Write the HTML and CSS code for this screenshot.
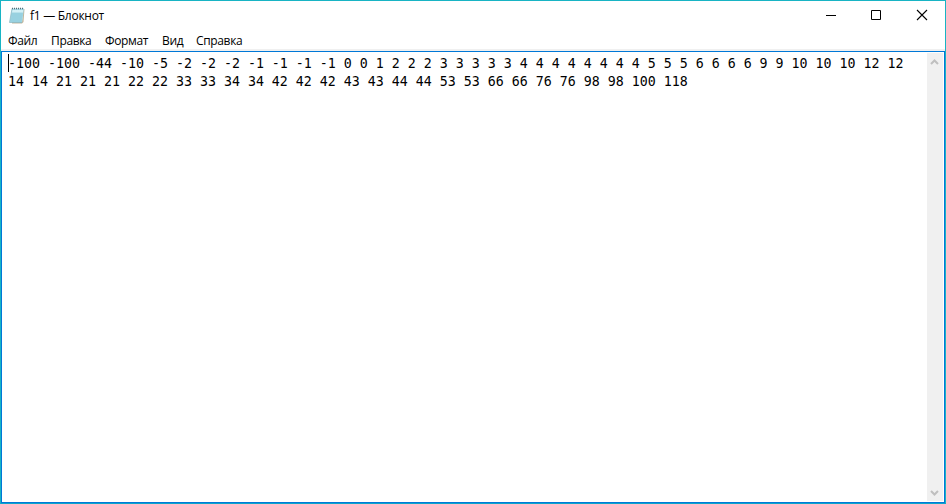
FILE: index.html
```html
<!DOCTYPE html>
<html lang="ru">
<head>
<meta charset="utf-8">
<title>f1 — Блокнот</title>
<link rel="stylesheet" href="styles.css">
</head>
<body>
<div class="window">
  <header class="titlebar">
    <svg class="app-icon" width="16" height="17" viewBox="0 0 16 17">
      <path d="M14 2h1.500l-1 13-1.500 1.500H3V15h10z" fill="#c2b79d"/>
      <path d="M3 1.500h12L13 15.500H.5z" fill="#a4d8e6"/>
      <path d="M3.400 3h10.800l-.3 3H3z" fill="#d3f0f6"/>
      <path d="M2.800 6h11M2.500 8h11M2.200 10h11M1.900 12h11M1.600 14h11" stroke="#7cc3d5" stroke-width=".6"/>
      <path d="M3 1.500L.5 15.500H13" fill="none" stroke="#86b5c0" stroke-width=".7"/>
      <path d="M3 1.500h12" stroke="#526f78" stroke-width="1.500" stroke-dasharray="1 1"/>
    </svg>
    <span class="title">f1 — Блокнот</span>
    <div class="controls">
      <svg width="46" height="29" viewBox="0 0 46 29"><path d="M18 14.500h10" stroke="#000"/></svg>
      <svg width="46" height="29" viewBox="0 0 46 29"><path d="M17.500 9.500h9v9h-9z" fill="none" stroke="#000"/></svg>
      <svg width="46" height="29" viewBox="0 0 46 29"><path d="M17 9l10 10M27 9L17 19" stroke="#000" stroke-width="1.100"/></svg>
    </div>
  </header>
  <nav class="menu">
    <span class="file">Файл</span><span class="edit">Правка</span><span class="format">Формат</span><span class="view">Вид</span><span class="help">Справка</span>
  </nav>
  <main class="editor">
    <div class="text"><span class="caret"></span>-100 -100 -44 -10 -5 -2 -2 -2 -1 -1 -1 -1 0 0 1 2 2 2 3 3 3 3 3 4 4 4 4 4 4 4 4 5 5 5 6 6 6 6 9 9 10 10 10 12 12
14 14 21 21 21 22 22 33 33 34 34 42 42 42 43 43 44 44 53 53 66 66 76 76 98 98 100 118</div>
    <div class="scrollbar">
      <svg width="16" height="17" viewBox="0 0 16 17"><path d="M4 11l3.500-3.500L11 11" fill="none" stroke="#bfbfbf" stroke-width="2"/></svg>
      <svg width="16" height="17" viewBox="0 0 16 17"><path d="M4 7l3.500 3.500L11 7" fill="none" stroke="#bfbfbf" stroke-width="2"/></svg>
    </div>
  </main>
</div>
</body>
</html>
```
FILE: styles.css
```css
* { box-sizing: border-box; }
body { margin: 0; background: #fff; }
.window {
  width: 946px;
  height: 504px;
  display: flex;
  flex-direction: column;
  border: 1px solid #18b4c4;
  border-bottom-color: #0ba5cc;
  background: #fff;
  color: #000;
  font: 12px/16px "Open Sans", "Noto Sans", sans-serif;
  overflow: hidden;
}
.titlebar { height: 30px; display: flex; flex: none; }
.app-icon { margin: 6px 0 0 8px; flex: none; }
.title { margin: 7px 0 0 5px; letter-spacing: -.27px; white-space: nowrap; }
.controls { display: flex; margin-left: auto; margin-right: -1px; }
.menu {
  height: 20px;
  flex: none;
  display: flex;
  gap: 14px;
  padding: 2px 0 0 7px;
  border-bottom: 2px solid #f0f0f0;
  letter-spacing: -.35px;
  white-space: nowrap;
}
.file { width: 29px; }
.edit { width: 40px; }
.format { width: 43px; }
.view { width: 20px; }
.help { width: 46px; }
.editor {
  flex: 1;
  display: flex;
  justify-content: space-between;
  border: 1px solid #0078d7;
  padding: 1px 1px 1px 0;
}
.text {
  padding: 2px 0 0 6px;
  font: 13.29px/18px "DejaVu Sans Mono", monospace;
  white-space: pre;
}
.caret {
  display: inline-block;
  width: 1px;
  height: 18px;
  margin-top: -1px;
  margin-right: -1px;
  background: #000;
  vertical-align: top;
}
.scrollbar {
  width: 16px;
  display: flex;
  flex-direction: column;
  justify-content: space-between;
  background: #f0f0f0;
}
```
